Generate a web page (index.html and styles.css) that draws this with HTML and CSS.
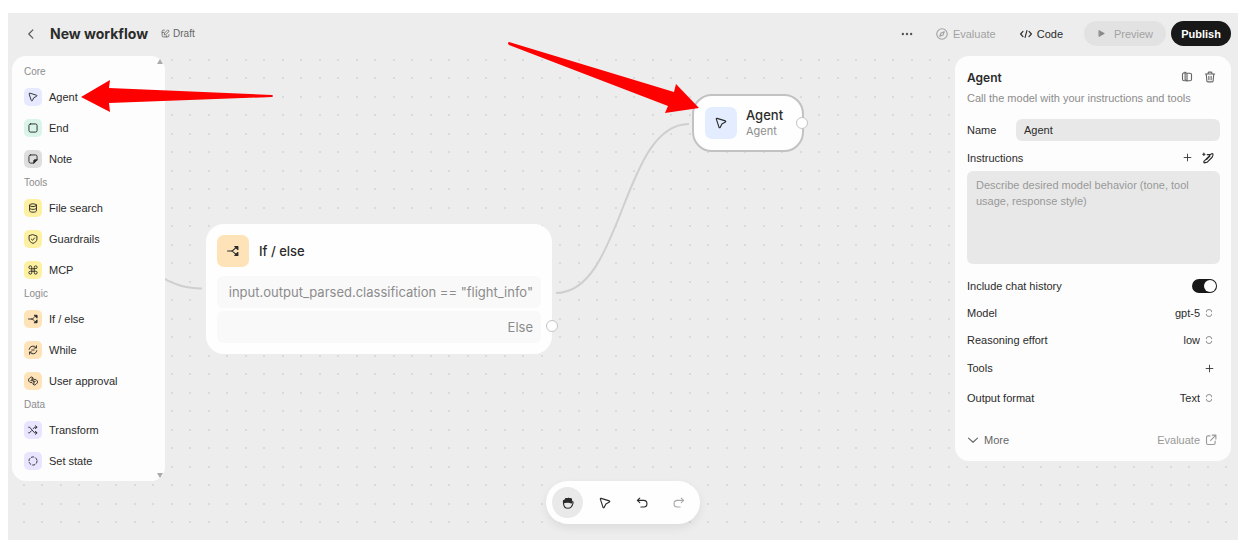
FILE: index.html
```
<!DOCTYPE html>
<html lang="en">
<head>
    <meta charset="UTF-8">
    <title>New workflow</title>
    <link rel="stylesheet" href="styles.css">
</head>
<body>
    <!-- Shared icons -->
    <svg class="sprite" aria-hidden="true">
        <symbol id="i-cursor" viewBox="0 0 16 16"><path d="M1.800 2.800 Q1.500 1.500 2.800 1.800L13.800 5.200Q15 6 13.800 6.800L9.200 9.200 7 13.800Q6.200 15 5.400 13.800z"/></symbol>
        <symbol id="i-square" viewBox="0 0 16 16"><rect x="1.500" y="1.500" width="13" height="13" rx="2.500"/></symbol>
        <symbol id="i-note" viewBox="0 0 16 16"><path d="M4 1.500h8a2.500 2.500 0 0 1 2.500 2.500v5.500l-5 5H4A2.500 2.500 0 0 1 1.500 12V4A2.500 2.500 0 0 1 4 1.500z"/><path d="M9.300 14.300V10.500a1.200 1.200 0 0 1 1.200-1.200h3.800z" fill="currentColor"/></symbol>
        <symbol id="i-db" viewBox="0 0 16 16"><ellipse cx="8" cy="3.500" rx="5.500" ry="2.200"/><path d="M2.500 3.500v9c0 1.200 2.200 2.200 5.500 2.200s5.500-1 5.500-2.200v-9M2.500 8c0 1.200 2.200 2.200 5.500 2.200S13.500 9.200 13.500 8"/></symbol>
        <symbol id="i-shield" viewBox="0 0 16 16"><path d="M8 1.200 14.300 3.200V8c0 3.400-2.700 5.600-6.300 7C4.400 13.600 1.700 11.400 1.700 8V3.200zM5.400 8.200l2 1.800 3.200-3.800"/></symbol>
        <symbol id="i-command" viewBox="0 0 16 16"><path d="M6 6H4A2.300 2.300 0 1 1 6 4V12A2.300 2.300 0 1 1 4 10H12A2.300 2.300 0 1 1 10 12V4A2.300 2.300 0 1 1 12 6z"/></symbol>
        <symbol id="i-branch" viewBox="0 0 16 16"><path d="M.8 8h4.500c2.500 0 3.500-1.500 6.500-4.500M5.300 8c2.500 0 3.500 1.500 6.500 4.500"/><path d="M10.500 2h4v4zM10.500 14h4v-4z" fill="currentColor"/></symbol>
        <symbol id="i-loop" viewBox="0 0 16 16"><path d="M1.800 7A6.300 6.300 0 0 1 13 4.200M14.200 9A6.300 6.300 0 0 1 3 11.800M13.500 1.200v3.600H9.900M2.500 14.800v-3.600h3.600M6 8h4"/></symbol>
        <symbol id="i-approval" viewBox="0 0 16 16"><path d="M6 10.500H3.500L1 8V5l2.500-2.500L6 1.500 8 3v2H5.500M4.500 7.500H7M10 5.500h2.500L15 8v3l-2.500 2.500L10 14.500 8 13v-2h2.500M11.500 8.500H8V5"/></symbol>
        <symbol id="i-shuffle" viewBox="0 0 16 16"><path d="M1 3.500h1.500l8 9H14M1 12.500h1.500l3-3.300M8.500 5.800l2-2.300H14M11.800 1.200l2.700 2.300-2.700 2.300M11.800 10.200l2.700 2.300-2.700 2.300"/></symbol>
        <symbol id="i-dashed" viewBox="0 0 16 16"><circle cx="8" cy="8" r="6.500" stroke-dasharray="3.800 3"/></symbol>
        <symbol id="i-plus" viewBox="0 0 16 16"><path d="M8 2v12M2 8h12"/></symbol>
        <symbol id="i-updown" viewBox="0 0 16 16"><path d="M4 6V5a4 2.500 0 0 1 8 0v1M4 10v1a4 2.500 0 0 0 8 0v-1"/></symbol>
    </svg>

    <div class="app">
        <!-- Canvas -->
        <main class="canvas">
            <svg class="edges" aria-hidden="true">
                <path d="M150 262c14 9 26 13 44 13.500"/>
                <path d="M548 280c67 0 66-169 133-169"/>
            </svg>

            <section class="node node-if">
                <div class="node-head">
                    <span class="node-icon orange"><svg class="icon"><use href="#i-branch"/></svg></span>
                    <span class="node-title">If / else</span>
                </div>
                <div class="case">input.output_parsed.classification == "flight_info"</div>
                <div class="case">Else</div>
                <span class="handle"></span>
            </section>

            <section class="node node-agent">
                <span class="node-icon blue"><svg class="icon"><use href="#i-cursor"/></svg></span>
                <div>
                    <div class="node-title">Agent</div>
                    <div class="node-kind">Agent</div>
                </div>
                <span class="handle"></span>
            </section>
        </main>

        <header class="topbar">
            <button class="plain back" aria-label="Back"><svg class="icon" viewBox="0 0 16 16"><path d="M10.500 2.500 5 8l5.500 5.500"/></svg></button>
            <h1>New workflow</h1>
            <span class="draft">
                <svg class="icon" viewBox="0 0 16 16"><path d="M6 2H4a2 2 0 0 0-2 2v8a2 2 0 0 0 2 2h8a2 2 0 0 0 2-2v-2M6 10l.5-3L12 1.500 14.500 4 9 9.500zM2 6h3M10 14v-2"/></svg>
                Draft
            </span>
            <div class="actions">
                <button class="plain more" aria-label="Menu"><svg class="icon" viewBox="0 0 16 16"><g fill="currentColor" stroke="none"><circle cx="2.500" cy="8" r="1.600"/><circle cx="8" cy="8" r="1.600"/><circle cx="13.500" cy="8" r="1.600"/></g></svg></button>
                <button class="plain evaluate" disabled><svg class="icon" viewBox="0 0 16 16"><circle cx="8" cy="8" r="7"/><path d="M11 5 9.300 9.300 5 11l1.700-4.300z"/></svg>Evaluate</button>
                <button class="plain code"><svg class="icon" viewBox="0 0 16 16"><path d="M4 4.500.8 8 4 11.500M12 4.500 15.200 8 12 11.500M9.200 3.500 6.800 12.500"/></svg>Code</button>
                <button class="pill preview" disabled><svg class="icon" viewBox="0 0 16 16"><path d="M4 3l9 5-9 5z" fill="currentColor"/></svg>Preview</button>
                <button class="pill publish">Publish</button>
            </div>
        </header>

        <div class="workspace">
            <!-- Node palette -->
            <aside class="palette">
                <h2>Core</h2>
                <button><span class="tile indigo"><svg class="icon"><use href="#i-cursor"/></svg></span>Agent</button>
                <button><span class="tile green"><svg class="icon"><use href="#i-square"/></svg></span>End</button>
                <button><span class="tile gray"><svg class="icon"><use href="#i-note"/></svg></span>Note</button>
                <h2>Tools</h2>
                <button><span class="tile yellow"><svg class="icon"><use href="#i-db"/></svg></span>File search</button>
                <button><span class="tile yellow"><svg class="icon"><use href="#i-shield"/></svg></span>Guardrails</button>
                <button><span class="tile yellow"><svg class="icon"><use href="#i-command"/></svg></span>MCP</button>
                <h2>Logic</h2>
                <button><span class="tile orange"><svg class="icon"><use href="#i-branch"/></svg></span>If / else</button>
                <button><span class="tile orange"><svg class="icon"><use href="#i-loop"/></svg></span>While</button>
                <button><span class="tile orange"><svg class="icon"><use href="#i-approval"/></svg></span>User approval</button>
                <h2>Data</h2>
                <button><span class="tile purple"><svg class="icon"><use href="#i-shuffle"/></svg></span>Transform</button>
                <button><span class="tile purple"><svg class="icon"><use href="#i-dashed"/></svg></span>Set state</button>
                <span class="scroll-up"></span>
                <span class="scroll-down"></span>
            </aside>

            <!-- Agent settings -->
            <aside class="inspector">
                <div class="inspector-head">
                    <h2>Agent</h2>
                    <button class="plain" aria-label="Docs"><svg class="icon" viewBox="0 0 16 16"><path d="M8 3.500v10M8 3.500 5.500 1.500v10L8 13.500M5.500 2.500H4a2 2 0 0 0-2 2V11a2 2 0 0 0 2 2h1.500M8 3h4a2 2 0 0 1 2 2v6a2 2 0 0 1-2 2H8"/></svg></button>
                    <button class="plain" aria-label="Delete"><svg class="icon" viewBox="0 0 16 16"><path d="M1.800 4h12.400M5.500 4V2.500a1 1 0 0 1 1-1h3a1 1 0 0 1 1 1V4M3 4l.8 9a1.500 1.500 0 0 0 1.500 1.500h5.400A1.500 1.500 0 0 0 12.200 13L13 4M6.500 7v4.500M9.500 7v4.500"/></svg></button>
                </div>
                <p>Call the model with your instructions and tools</p>
                <div class="name-row">
                    <label for="name">Name</label>
                    <input id="name" type="text" value="Agent">
                </div>
                <div class="row">
                    <label for="instructions">Instructions</label>
                    <button class="plain" aria-label="Add context"><svg class="icon small"><use href="#i-plus"/></svg></button>
                    <button class="plain wand" aria-label="Edit with AI"><svg class="icon" viewBox="0 0 16 16"><path d="M7 3.500h4L13.500 2Q15 2 14.500 4.500L13.500 7 7 13.500 3 14.500Q2 14 2.500 12.500L10.500 4.500M6 10 10.500 5.500"/><path d="M2.500 1.500v3M1 3h3"/></svg></button>
                </div>
                <textarea id="instructions" placeholder="Describe desired model behavior (tone, tool usage, response style)"></textarea>
                <div class="row">
                    <label for="history">Include chat history</label>
                    <input id="history" class="toggle" type="checkbox" checked>
                </div>
                <div class="row">
                    <label for="model">Model</label>
                    <select id="model"><option>gpt-5</option></select>
                    <svg class="icon updown"><use href="#i-updown"/></svg>
                </div>
                <div class="row">
                    <label for="effort">Reasoning effort</label>
                    <select id="effort"><option>low</option></select>
                    <svg class="icon updown"><use href="#i-updown"/></svg>
                </div>
                <div class="row tall">
                    <span class="label">Tools</span>
                    <button class="plain" aria-label="Add tool"><svg class="icon small"><use href="#i-plus"/></svg></button>
                </div>
                <div class="row tall">
                    <label for="format">Output format</label>
                    <select id="format"><option>Text</option></select>
                    <svg class="icon updown"><use href="#i-updown"/></svg>
                </div>
                <div class="inspector-foot">
                    <button class="plain"><svg class="icon" viewBox="0 0 16 16"><path d="M2 5.500 8 11l6-5.500"/></svg>More</button>
                    <a href="#">Evaluate<svg class="icon" viewBox="0 0 16 16"><path d="M6.500 2.500H4a2 2 0 0 0-2 2V12a2 2 0 0 0 2 2h7.500a2 2 0 0 0 2-2V9.500M9.500 1.500h5v5M14.500 1.500 7.500 8.500"/></svg></a>
                </div>
            </aside>
        </div>

        <!-- Canvas tools -->
        <div class="toolbar">
            <button class="active" aria-label="Pan"><svg class="icon" viewBox="0 0 16 16"><path d="M2 7.500V5.500C2 4 4.300 4 4.500 5V3.500C4.500 1.800 7 1.800 7.200 3 7.200 1.500 10 1.500 10.200 3.200c0-1.300 2.500-1.200 2.500.8V7c1-1.200 2.600-.6 2 .8-.6 1.700-1 7.200-6.700 7.200C4 15 2 12 2 7.500z"/><path d="M2 7.500V5.500C2 4 4.300 4 4.500 5V3.500C4.500 1.800 7 1.800 7.200 3 7.200 1.500 10 1.500 10.200 3.200c0-1.300 2.500-1.200 2.500.8V8L8 6.500z" fill="currentColor"/></svg></button>
            <button aria-label="Select"><svg class="icon"><use href="#i-cursor"/></svg></button>
            <button aria-label="Undo"><svg class="icon" viewBox="0 0 16 16"><path d="M5 1.500 1.800 4.500 5 7.500M2 4.500h8.200a4.400 4.400 0 0 1 0 8.800H6.500"/></svg></button>
            <button aria-label="Redo" disabled><svg class="icon" viewBox="0 0 16 16"><path d="M11 1.500 14.200 4.500 11 7.500M14 4.500H5.800a4.400 4.400 0 0 0 0 8.800h3.700"/></svg></button>
        </div>

        <!-- Pointers drawn over the editor -->
        <svg class="pointers" aria-hidden="true">
            <path d="M73 84 102 67l-1 8 163 7q2 1 0 2l-163 6 1 9z"/>
            <path d="M501 29 666 79l2-8 23 24-34 5 3-7L501 32q-2-2 0-3z"/>
        </svg>
    </div>
</body>
</html>
```
FILE: styles.css
```
* {
    box-sizing: border-box;
}
body {
    margin: 0;
    padding: 13px 13px 15px 8px;
    background: #fff;
    color: #2b2b2b;
    font-family: 'Liberation Sans', Arial, sans-serif;
    font-size: 11px;
}
button, input, select, textarea {
    font: inherit;
    color: inherit;
    border: 0;
    margin: 0;
    padding: 0;
    background: none;
}
h1, h2, p {
    margin: 0;
}
.sprite {
    position: absolute;
    width: 0;
    height: 0;
}
.icon {
    width: 12px;
    height: 12px;
    flex: none;
    fill: none;
    stroke: currentColor;
    stroke-width: 1.5;
    stroke-linecap: round;
    stroke-linejoin: round;
}
.icon.small {
    width: 9px;
    height: 9px;
}
.plain {
    display: flex;
    align-items: center;
    gap: 5px;
}

.app {
    position: relative;
    min-height: calc(100vh - 28px);
    background: #ededed;
    overflow: hidden;
}

/* Top bar */
.topbar {
    position: relative;
    display: flex;
    align-items: center;
    height: 43px;
    padding: 0 7px 2px 17px;
    background: #ededed;
}
.back {
    color: #555;
}
h1 {
    margin: 0 13px;
    font-family: Inter, Arial, sans-serif;
    font-size: 14px;
    font-weight: 700;
}
.draft {
    display: flex;
    align-items: center;
    gap: 3px;
    font-size: 10px;
    color: #666;
}
.draft .icon {
    width: 9px;
    height: 9px;
}
.actions {
    display: flex;
    align-items: center;
    margin-left: auto;
}
.more {
    margin-right: 23px;
    color: #555;
}
.evaluate {
    margin-right: 24px;
    color: #a2a2a2;
}
.code {
    margin-right: 21px;
}
.pill {
    display: flex;
    align-items: center;
    justify-content: center;
    height: 25px;
    border-radius: 13px;
}
.preview {
    width: 82px;
    gap: 8px;
    margin-right: 5px;
    background: #e2e2e2;
    color: #a2a2a2;
}
.preview .icon {
    width: 9px;
    height: 9px;
    color: #888;
}
.publish {
    width: 60px;
    background: #181818;
    color: #fff;
    font-weight: 700;
}

/* Canvas: dots repeat four to a tile */
.canvas {
    position: absolute;
    inset: 0;
    background-image:
        radial-gradient(circle at 1px 1px, #dadada 1px, transparent 1px),
        radial-gradient(circle at 1px 1px, #dadada 1px, transparent 1px),
        radial-gradient(circle at 1px 1px, #dadada 1px, transparent 1px),
        radial-gradient(circle at 1px 1px, #dadada 1px, transparent 1px);
    background-size: 37px 37px;
    background-position: 15px 9px, 33px 9px, 15px 27px, 33px 27px;
}
.edges, .pointers {
    position: absolute;
    left: 0;
    top: 0;
    width: 100%;
    height: 100%;
    pointer-events: none;
}
.edges {
    fill: none;
    stroke: #cfcfcf;
    stroke-width: 2;
}
.pointers {
    fill: #fe0000;
}
.node {
    position: absolute;
    background: #fefefe;
    border-radius: 18px;
    font-family: Inter, Arial, sans-serif;
}
.node-if {
    left: 198px;
    top: 211px;
    width: 346px;
    padding: 11px;
}
.node-agent {
    left: 684px;
    top: 81px;
    width: 112px;
    display: flex;
    align-items: center;
    gap: 9px;
    padding: 11px;
    border: 2px solid #c2c2c2;
    border-radius: 20px;
}
.node-head {
    display: flex;
    align-items: center;
    gap: 10px;
}
.node-icon {
    display: grid;
    place-items: center;
    width: 32px;
    height: 32px;
    border-radius: 7px;
}
.node-title {
    font-size: 13px;
    line-height: 17px;
    font-weight: 500;
}
.node-kind {
    line-height: 15px;
    color: #8c8c8c;
}
.case {
    height: 32px;
    margin-top: 9px;
    padding: 0 8px;
    border-radius: 6px;
    background: #f9f9f9;
    color: #8c8c8c;
    font-size: 13px;
    line-height: 32px;
    text-align: right;
    white-space: nowrap;
}
.case + .case {
    margin-top: 3px;
}
.handle {
    position: absolute;
    right: -6px;
    width: 12px;
    height: 12px;
    border: 1px solid #c4c4c4;
    border-radius: 50%;
    background: #fff;
}
.node-if .handle {
    bottom: 22px;
}
.node-agent .handle {
    top: 21px;
}

/* Tile colours */
.indigo { background: #e6e9ff; }
.blue { background: #e3edff; }
.green { background: #d9f4e8; }
.gray { background: #dedede; }
.yellow { background: #fdf0a0; }
.orange { background: #ffe3b8; }
.purple { background: #e9e4ff; }

.workspace {
    display: flex;
    justify-content: space-between;
    align-items: flex-start;
    padding: 0 7px 59px 4px;
}

/* Palette */
.palette {
    position: relative;
    width: 153px;
    padding: 7px 12px 5px;
    background: #fdfdfd;
    border-radius: 14px;
}
.palette h2 {
    font-size: 10px;
    font-weight: 400;
    line-height: 18px;
    color: #8c8c8c;
}
.palette button {
    display: flex;
    align-items: center;
    gap: 7px;
    width: 100%;
    height: 31px;
}
.tile {
    display: grid;
    place-items: center;
    width: 18px;
    height: 18px;
    border-radius: 5px;
}
.tile .icon {
    width: 10px;
    height: 10px;
}
.scroll-up, .scroll-down {
    position: absolute;
    right: 2px;
    border: 3px solid transparent;
}
.scroll-up {
    top: 0;
    border-bottom: 5px solid #aaa;
}
.scroll-down {
    bottom: 0;
    border-top: 5px solid #aaa;
}

/* Inspector */
.inspector {
    position: relative;
    width: 276px;
    padding: 10px 11px 8px 12px;
    background: #fdfdfd;
    border-radius: 14px;
}
.inspector-head {
    display: flex;
    align-items: center;
    gap: 11px;
    height: 22px;
    padding-right: 4px;
    color: #666;
}
.inspector-head h2 {
    flex: 1;
    font-family: Inter, Arial, sans-serif;
    font-size: 12px;
    font-weight: 600;
    color: #2b2b2b;
}
.inspector p {
    line-height: 20px;
    color: #8c8c8c;
    white-space: nowrap;
}
.name-row {
    display: flex;
    align-items: center;
    margin: 11px 0 3px;
}
.name-row label {
    width: 49px;
}
.name-row input {
    flex: 1;
    min-width: 0;
    height: 22px;
    padding: 0 8px;
    border-radius: 6px;
    background: #e8e8e8;
}
.row {
    display: flex;
    align-items: center;
    height: 27px;
    padding-right: 6px;
}
.row.tall {
    height: 30px;
}
.row label, .row .label {
    flex: 1;
}
.wand {
    margin-left: 10px;
}
textarea {
    display: block;
    width: 100%;
    height: 93px;
    margin-bottom: 8px;
    padding: 6px 9px;
    border-radius: 6px;
    background: #e8e8e8;
    line-height: 16px;
    resize: none;
}
textarea::placeholder {
    color: #999;
}
.toggle {
    appearance: none;
    width: 25px;
    height: 14px;
    margin-right: -3px;
    padding: 1px;
    border-radius: 7px;
    background: #181818;
}
.toggle::before {
    content: '';
    display: block;
    width: 12px;
    height: 12px;
    border-radius: 50%;
    background: #fff;
}
.toggle:checked::before {
    margin-left: auto;
}
select {
    appearance: none;
    text-align-last: right;
}
.updown {
    width: 10px;
    height: 10px;
    margin-left: 4px;
    color: #888;
}
.inspector-foot {
    display: flex;
    align-items: center;
    justify-content: space-between;
    height: 26px;
    margin-top: 14px;
    padding-right: 3px;
    color: #666;
}
.inspector-foot a {
    display: flex;
    align-items: center;
    gap: 5px;
    color: #999;
    text-decoration: none;
}

/* Bottom toolbar */
.toolbar {
    position: absolute;
    left: 50%;
    bottom: 16px;
    transform: translateX(-50%);
    display: flex;
    gap: 6px;
    padding: 6px;
    border-radius: 22px;
    background: #fefefe;
    box-shadow: 0 4px 10px rgba(0, 0, 0, 0.07);
}
.toolbar button {
    display: grid;
    place-items: center;
    width: 31px;
    height: 31px;
    border-radius: 50%;
}
.toolbar .active {
    background: #e9e9e9;
}
.toolbar button:disabled {
    color: #aaa;
}
```
